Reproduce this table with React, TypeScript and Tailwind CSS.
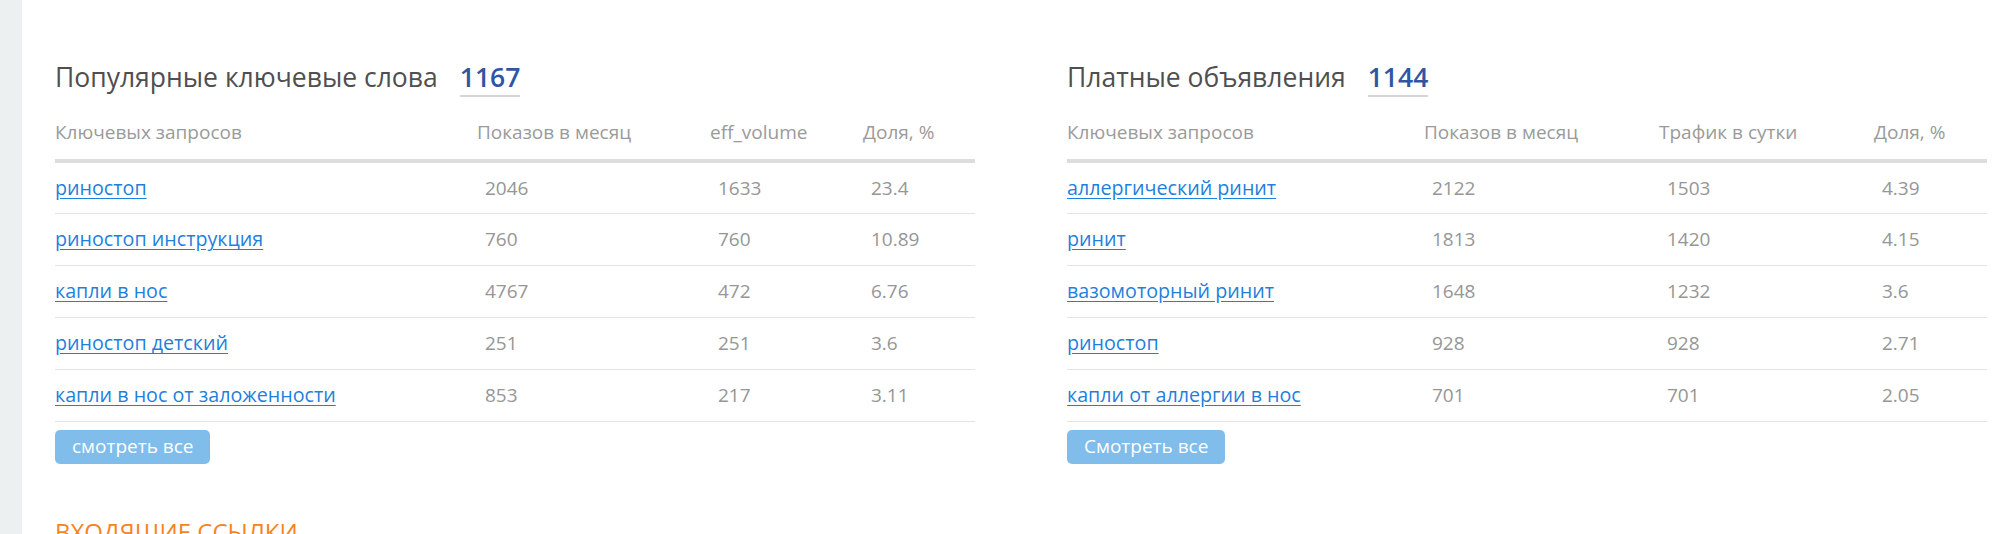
import React from 'react';

type Row = { q: string; a: string; b: string; c: string };

const popular: Row[] = [
  { q: 'риностоп', a: '2046', b: '1633', c: '23.4' },
  { q: 'риностоп инструкция', a: '760', b: '760', c: '10.89' },
  { q: 'капли в нос', a: '4767', b: '472', c: '6.76' },
  { q: 'риностоп детский', a: '251', b: '251', c: '3.6' },
  { q: 'капли в нос от заложенности', a: '853', b: '217', c: '3.11' },
];

const paid: Row[] = [
  { q: 'аллергический ринит', a: '2122', b: '1503', c: '4.39' },
  { q: 'ринит', a: '1813', b: '1420', c: '4.15' },
  { q: 'вазомоторный ринит', a: '1648', b: '1232', c: '3.6' },
  { q: 'риностоп', a: '928', b: '928', c: '2.71' },
  { q: 'капли от аллергии в нос', a: '701', b: '701', c: '2.05' },
];

const KeywordTable: React.FC<{
  title: string;
  total: string;
  cols: string[];
  widths: string[];
  rows: Row[];
  button: string;
}> = ({ title, total, cols, widths, rows, button }) => {
  return (
    <div className="w-[920px]">
      <h2 className="text-[26.5px] leading-[36px] text-[#4f4f4f] font-normal">
        {title}
        <a href="#" className="ml-[22px] font-semibold text-[#2f56a3] border-b-2 border-[#d6d6d6]">
          {total}
        </a>
      </h2>

      <table className="mt-[24px] w-full table-fixed border-collapse text-[19px]">
        <colgroup>
          {widths.map((w, i) => (
            <col key={i} className={w} />
          ))}
        </colgroup>
        <thead>
          <tr className="border-b-4 border-[#dddddd]">
            {cols.map((c) => (
              <th key={c} className="text-left font-normal text-[#9a9a9a] leading-[26px] pb-[14px]">
                {c}
              </th>
            ))}
          </tr>
        </thead>
        <tbody>
          {rows.map((r) => (
            <tr key={r.q} className="h-[52px] border-b-[1.5px] border-[#e4e4e4]">
              <td>
                <a href="#" className="text-[19.7px] text-[#1f7fdc] underline underline-offset-[3px]">
                  {r.q}
                </a>
              </td>
              <td className="pl-2 text-[#969696]">{r.a}</td>
              <td className="pl-2 text-[#969696]">{r.b}</td>
              <td className="pl-2 text-[#969696]">{r.c}</td>
            </tr>
          ))}
        </tbody>
      </table>

      <button className="mt-[8px] h-[34px] px-[17px] rounded-[5px] bg-[#80bdeb] text-white text-[19px] leading-none">
        {button}
      </button>
    </div>
  );
};

export default function App() {
  return (
    <div className="flex min-h-[534px] bg-white overflow-hidden" style={{ fontFamily: '"Open Sans", "Noto Sans", sans-serif' }}>
      <div className="w-[22px] shrink-0 bg-[#edf0f1]" />
      <main className="flex-1 pl-[33px] pt-[59px]">
        <div className="flex gap-[92px]">
          <KeywordTable
            title="Популярные ключевые слова"
            total="1167"
            cols={['Ключевых запросов', 'Показов в месяц', 'eff_volume', 'Доля, %']}
            widths={['w-[422px]', 'w-[233px]', 'w-[153px]', 'w-[112px]']}
            rows={popular}
            button="смотреть все"
          />
          <KeywordTable
            title="Платные объявления"
            total="1144"
            cols={['Ключевых запросов', 'Показов в месяц', 'Трафик в сутки', 'Доля, %']}
            widths={['w-[357px]', 'w-[235px]', 'w-[215px]', 'w-[113px]']}
            rows={paid}
            button="Смотреть все"
          />
        </div>

        <h3 className="mt-[50px] text-[24px] uppercase text-[#f5841f]">Входящие ссылки</h3>
      </main>
    </div>
  );
}
